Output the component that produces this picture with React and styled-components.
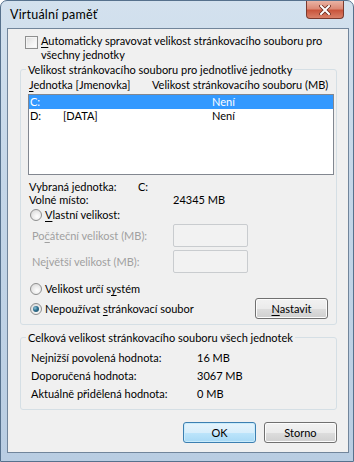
import styled, { createGlobalStyle } from "styled-components";

const GlobalStyle = createGlobalStyle`
  html, body { margin: 0; padding: 0; background: #fff; }
  body {
    font-family: Lato, "Liberation Sans", sans-serif;
    font-size: 11px;
    color: #000;
  }
  #root { width: 354px; height: 462px; }
`;

const Window = styled.div`
  width: 354px;
  height: 462px;
  box-sizing: border-box;
  display: flex;
  flex-direction: column;
  border: 1px solid #56718d;
  border-radius: 7px 7px 0 0;
  padding: 0 4px 8px 6px;
  background: linear-gradient(180deg, #d3e1ee 0%, #c4d6e8 40%, #b9cde2 100%);
`;

const TitleBar = styled.div`
  height: 27px;
  display: flex;
  align-items: flex-start;
  position: relative;
`;

const Title = styled.span`
  margin: 6px 0 0 3px;
  font-size: 12.5px;
  line-height: 15px;
  letter-spacing: 0.2px;
`;

const CloseButton = styled.div`
  position: absolute;
  right: 5px;
  top: 0;
  width: 38px;
  height: 18px;
  box-sizing: border-box;
  border: 1px solid #7a3a2e;
  border-top: none;
  border-radius: 0 0 4px 4px;
  background: linear-gradient(180deg, #eab3a4 0%, #dc8a76 45%, #c9553c 55%, #d98068 100%);
  display: flex;
  align-items: center;
  justify-content: center;
`;

const Client = styled.div`
  flex: 1;
  display: flex;
  flex-direction: column;
  background: #f0f0f0;
  border: 1px solid #71859b;
  padding: 5px 11px 0 12px;
`;

const CheckRow = styled.label`
  display: flex;
  align-items: flex-start;
  gap: 3px;
  margin-left: 5px;
  line-height: 14px;
`;

const CheckBox = styled.span`
  flex: none;
  width: 13px;
  height: 13px;
  box-sizing: border-box;
  margin-top: 2px;
  border: 1px solid #8e8f8f;
  background: linear-gradient(135deg, #dcdcdc 0%, #f4f4f4 60%, #ffffff 100%);
  box-shadow: inset 0 0 0 1px #f4f4f4;
`;

const GroupBox = styled.fieldset`
  margin: ${(p) => p.$top || 0}px 0 0 0;
  border: 1px solid #d5dfe5;
  border-radius: 3px;
  padding: ${(p) => p.$pad};
  min-width: 0;
`;

const Legend = styled.legend`
  padding: 0 2px;
  margin-left: -2px;
  line-height: 15px;
`;

const HeaderRow = styled.div`
  display: grid;
  grid-template-columns: 123px 1fr;
  padding-left: 1px;
  line-height: 15px;
`;

const ListBox = styled.div`
  margin-top: 2px;
  height: 81px;
  box-sizing: border-box;
  border: 1px solid #828790;
  background: #fff;
  padding: 0;
`;

const ListRow = styled.div`
  display: grid;
  grid-template-columns: 33px 149px 1fr;
  height: 14px;
  line-height: 14px;
  padding-left: 1px;
  background: ${(p) => (p.$selected ? "#3399ff" : "transparent")};
  color: ${(p) => (p.$selected ? "#fff" : "#000")};
`;

const InfoRow = styled.div`
  display: grid;
  grid-template-columns: ${(p) => p.$col}px 1fr;
  padding-left: 1px;
  line-height: 13px;
  margin-top: ${(p) => p.$top || 0}px;
`;

const RadioRow = styled.div`
  display: flex;
  align-items: center;
  gap: 3px;
  padding-left: 2px;
  height: ${(p) => p.$h || 15}px;
  margin-top: ${(p) => p.$top || 0}px;
`;

const Radio = styled.span`
  flex: none;
  width: 12px;
  height: 12px;
  box-sizing: border-box;
  border-radius: 50%;
  border: 1px solid #8e8f8f;
  background: radial-gradient(circle at 60% 65%, #ffffff 0%, #ececec 45%, #d2d2d2 100%);
  display: flex;
  align-items: center;
  justify-content: center;
  &::after {
    content: "";
    display: ${(p) => (p.$on ? "block" : "none")};
    width: 6px;
    height: 6px;
    border-radius: 50%;
    background: radial-gradient(circle at 35% 35%, #8fc4d8 0%, #2e6f8f 45%, #1d4a5e 100%);
  }
`;

const SizeRow = styled.div`
  display: grid;
  grid-template-columns: 141px 75px;
  align-items: center;
  padding-left: 4px;
  color: #a0a0a0;
  margin-top: ${(p) => p.$top || 0}px;
`;

const TextBox = styled.div`
  height: 23px;
  box-sizing: border-box;
  border: 1px solid #c9cccf;
  border-radius: 2px;
  background: #f2f2f2;
`;

const Spacer = styled.div`
  flex: 1;
`;

const Button = styled.div`
  width: 73px;
  height: ${(p) => p.$h || 21}px;
  box-sizing: border-box;
  display: flex;
  align-items: center;
  justify-content: center;
  border: 1px solid ${(p) => (p.$default ? "#3c7fb1" : "#707070")};
  border-radius: 3px;
  background: ${(p) =>
    p.$default
      ? "linear-gradient(180deg, #e5f4fc 0%, #d8eefb 50%, #bde5fb 51%, #a7d9f5 100%)"
      : "linear-gradient(180deg, #f2f2f2 0%, #ebebeb 50%, #dddddd 51%, #cfcfcf 100%)"};
  box-shadow: inset 0 0 0 1px ${(p) => (p.$default ? "#c9ebfb" : "#fcfcfc")};
  margin-right: ${(p) => p.$right || 0}px;
`;

const ValueRow = styled.div`
  display: grid;
  grid-template-columns: 166px 1fr;
  padding-left: 3px;
  height: 18px;
  line-height: 18px;
`;

const ButtonRow = styled.div`
  display: flex;
  justify-content: flex-end;
  gap: 8px;
  margin-top: 12px;
`;

const U = styled.span`
  text-decoration: underline;
  text-underline-offset: 2px;
`;

export default function App() {
  return (
    <>
      <GlobalStyle />
      <Window>
        <TitleBar>
          <Title>Virtuální paměť</Title>
          <CloseButton>
            <svg width="12" height="10" viewBox="0 0 12 10">
              <path d="M2 1 L10 9 M10 1 L2 9" stroke="#6a2a1e" strokeWidth="3.6" strokeLinecap="square" />
              <path d="M2 1 L10 9 M10 1 L2 9" stroke="#fff" strokeWidth="2" strokeLinecap="square" />
            </svg>
          </CloseButton>
        </TitleBar>
        <Client>
          <CheckRow>
            <CheckBox />
            <span>
              <U>A</U>utomaticky spravovat velikost stránkovacího souboru pro
              <br />
              všechny jednotky
            </span>
          </CheckRow>
          <GroupBox $pad="0 2px 5px 7px">
            <Legend>Velikost stránkovacího souboru pro jednotlivé jednotky</Legend>
            <HeaderRow>
              <span>
                <U>J</U>ednotka [Jmenovka]
              </span>
              <span>Velikost stránkovacího souboru (MB)</span>
            </HeaderRow>
            <ListBox>
              <ListRow $selected>
                <span>C:</span>
                <span></span>
                <span>Není</span>
              </ListRow>
              <ListRow>
                <span>D:</span>
                <span>[DATA]</span>
                <span>Není</span>
              </ListRow>
            </ListBox>
            <InfoRow $col={109} $top={5}>
              <span>Vybraná jednotka:</span>
              <span>C:</span>
            </InfoRow>
            <InfoRow $col={144}>
              <span>Volné místo:</span>
              <span>24345 MB</span>
            </InfoRow>
            <RadioRow $top={1}>
              <Radio />
              <span>
                <U>V</U>lastní velikost:
              </span>
            </RadioRow>
            <SizeRow $top={2}>
              <span>
                Po<U>č</U>áteční velikost (MB):
              </span>
              <TextBox />
            </SizeRow>
            <SizeRow $top={3}>
              <span>
                Ne<U>j</U>větší velikost (MB):
              </span>
              <TextBox />
            </SizeRow>
            <RadioRow $top={8}>
              <Radio />
              <span>
                Velikost určí s<U>y</U>stém
              </span>
            </RadioRow>
            <RadioRow $h={21} $top={2}>
              <Radio $on />
              <span>
                Nepoužívat <U>s</U>tránkovací soubor
              </span>
              <Spacer />
              <Button $right={6}>
                <span>
                  <U>N</U>astavit
                </span>
              </Button>
            </RadioRow>
          </GroupBox>
          <GroupBox $top={5} $pad="4px 2px 6px 7px">
            <Legend>Celková velikost stránkovacího souboru všech jednotek</Legend>
            <ValueRow>
              <span>Nejnižší povolená hodnota:</span>
              <span>16 MB</span>
            </ValueRow>
            <ValueRow>
              <span>Doporučená hodnota:</span>
              <span>3067 MB</span>
            </ValueRow>
            <ValueRow>
              <span>Aktuálně přidělená hodnota:</span>
              <span>0 MB</span>
            </ValueRow>
          </GroupBox>
          <ButtonRow>
            <Button $default $h={21}>OK</Button>
            <Button $h={21}>Storno</Button>
          </ButtonRow>
        </Client>
      </Window>
    </>
  );
}
